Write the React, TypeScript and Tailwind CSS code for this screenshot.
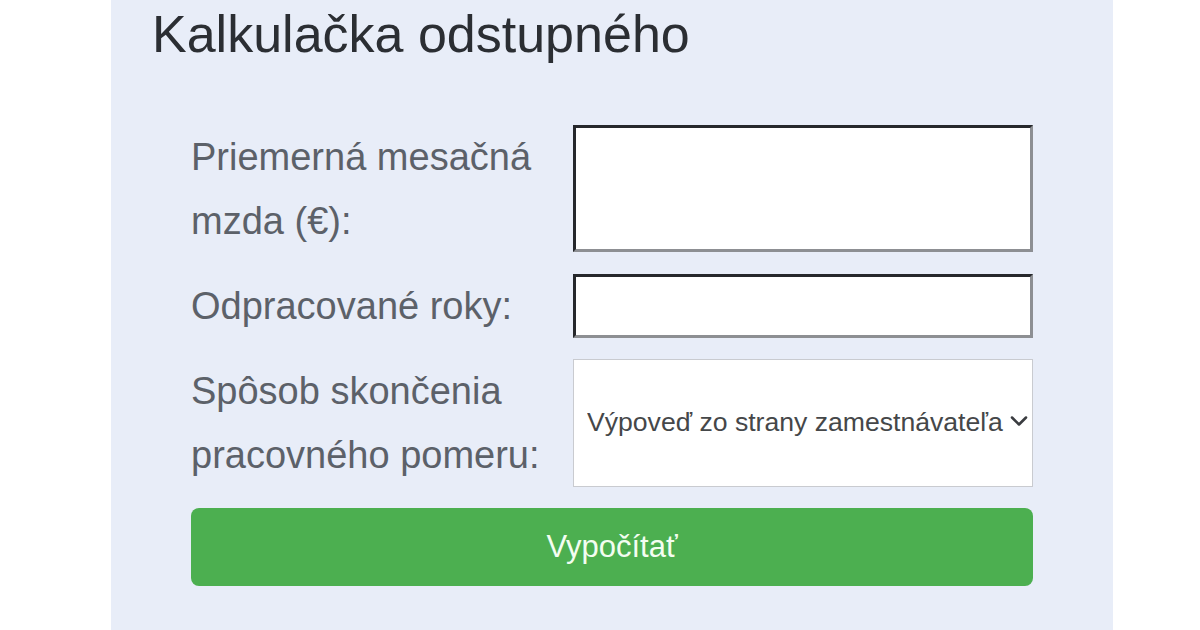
import { ChevronDown } from "lucide-react";

const FONT = "font-['Liberation_Sans',Arial,sans-serif]";

function Label({ children }: { children: React.ReactNode }) {
  return (
    <label className="flex items-center pr-6 text-[38px] leading-[64px] text-[#5c6169]">
      <span>{children}</span>
    </label>
  );
}

export default function App() {
  return (
    <div className={`h-[630px] w-[1200px] overflow-hidden bg-white ${FONT}`}>
      <div className="ml-[111px] h-full w-[1002px] bg-[#e8edf8] pt-2">
        <h2 className="pl-[41px] text-[52px] leading-[52px] text-[#2b2e33]">
          Kalkulačka odstupného
        </h2>

        {/* form */}
        <form className="mx-[80px] mt-[65px] grid grid-cols-[382px_1fr] gap-y-[21px]">
          <Label>Priemerná mesačná mzda (€):</Label>
          <input
            type="text"
            className="h-[127px] w-full border-[3px] border-t-[#26282c] border-l-[#26282c] border-b-[#8d8f93] border-r-[#8d8f93] bg-white outline-none"
          />

          <Label>Odpracované roky:</Label>
          <input
            type="text"
            className="h-[64px] w-full border-[3px] border-t-[#26282c] border-l-[#26282c] border-b-[#8d8f93] border-r-[#8d8f93] bg-white outline-none"
          />

          <Label>Spôsob skončenia pracovného pomeru:</Label>
          <div className="relative">
            <select className="h-[128px] w-full appearance-none border border-[#c9cbd0] bg-white pl-[13px] text-[26.6px] text-[#454749] outline-none">
              <option>Výpoveď zo strany zamestnávateľa</option>
              <option>Dohoda</option>
            </select>
            <ChevronDown
              className="pointer-events-none absolute right-0 top-[48px] h-[28px] w-[28px] text-[#3a3c40]"
              strokeWidth={2.2}
            />
          </div>

          <button
            type="button"
            className="col-span-2 h-[78px] rounded-lg bg-[#4caf50] text-[31px] text-[#f3fdf1]"
          >
            Vypočítať
          </button>
        </form>
      </div>
    </div>
  );
}
